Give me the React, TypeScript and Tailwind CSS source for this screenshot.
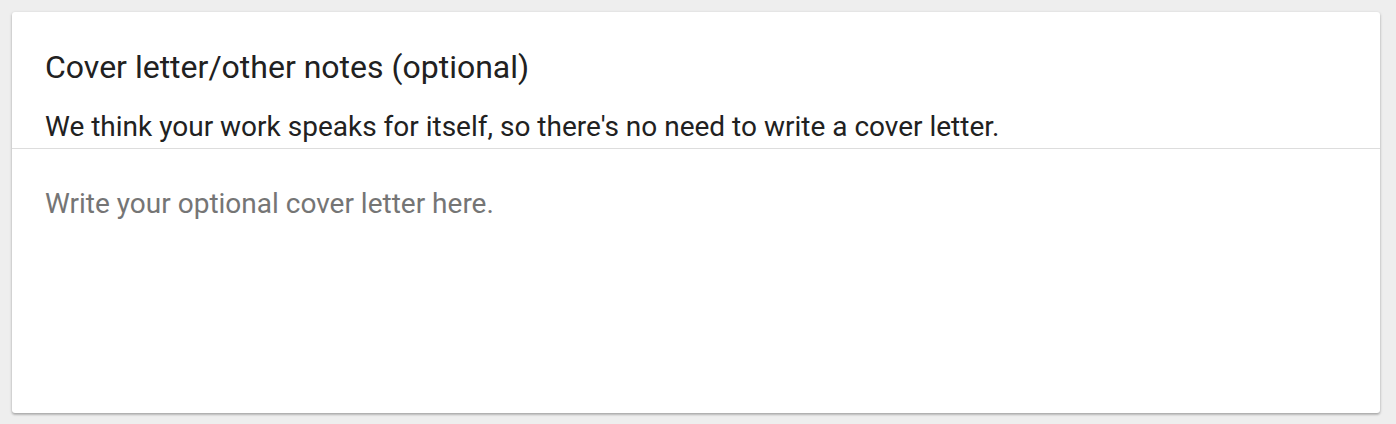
import React from 'react';

const App = () => {
  return (
    <div className="h-[424px] bg-[#eeeeee] p-3 font-['Roboto',sans-serif]">
      <div className="flex h-[401px] w-[1368px] flex-col rounded-[3px] bg-white shadow-[0_1px_3px_rgba(0,0,0,0.25),0_2px_2px_rgba(0,0,0,0.12)]">
        <div className="border-b border-[#dddddd] px-[33px] pt-[36px] pb-[4px]">
          <h2 className="text-[32px] leading-[38px] text-[#212121]">Cover letter/other notes (optional)</h2>
          <p className="mt-[24px] text-[28px] leading-[34px] text-[#212121]">
            We think your work speaks for itself, so there's no need to write a cover letter.
          </p>
        </div>
        <textarea
          className="flex-1 resize-none px-[33px] pt-[38px] text-[28px] leading-[34px] text-[#212121] outline-none placeholder:text-[#757575]"
          placeholder="Write your optional cover letter here."
        />
      </div>
    </div>
  );
};

export default App;
